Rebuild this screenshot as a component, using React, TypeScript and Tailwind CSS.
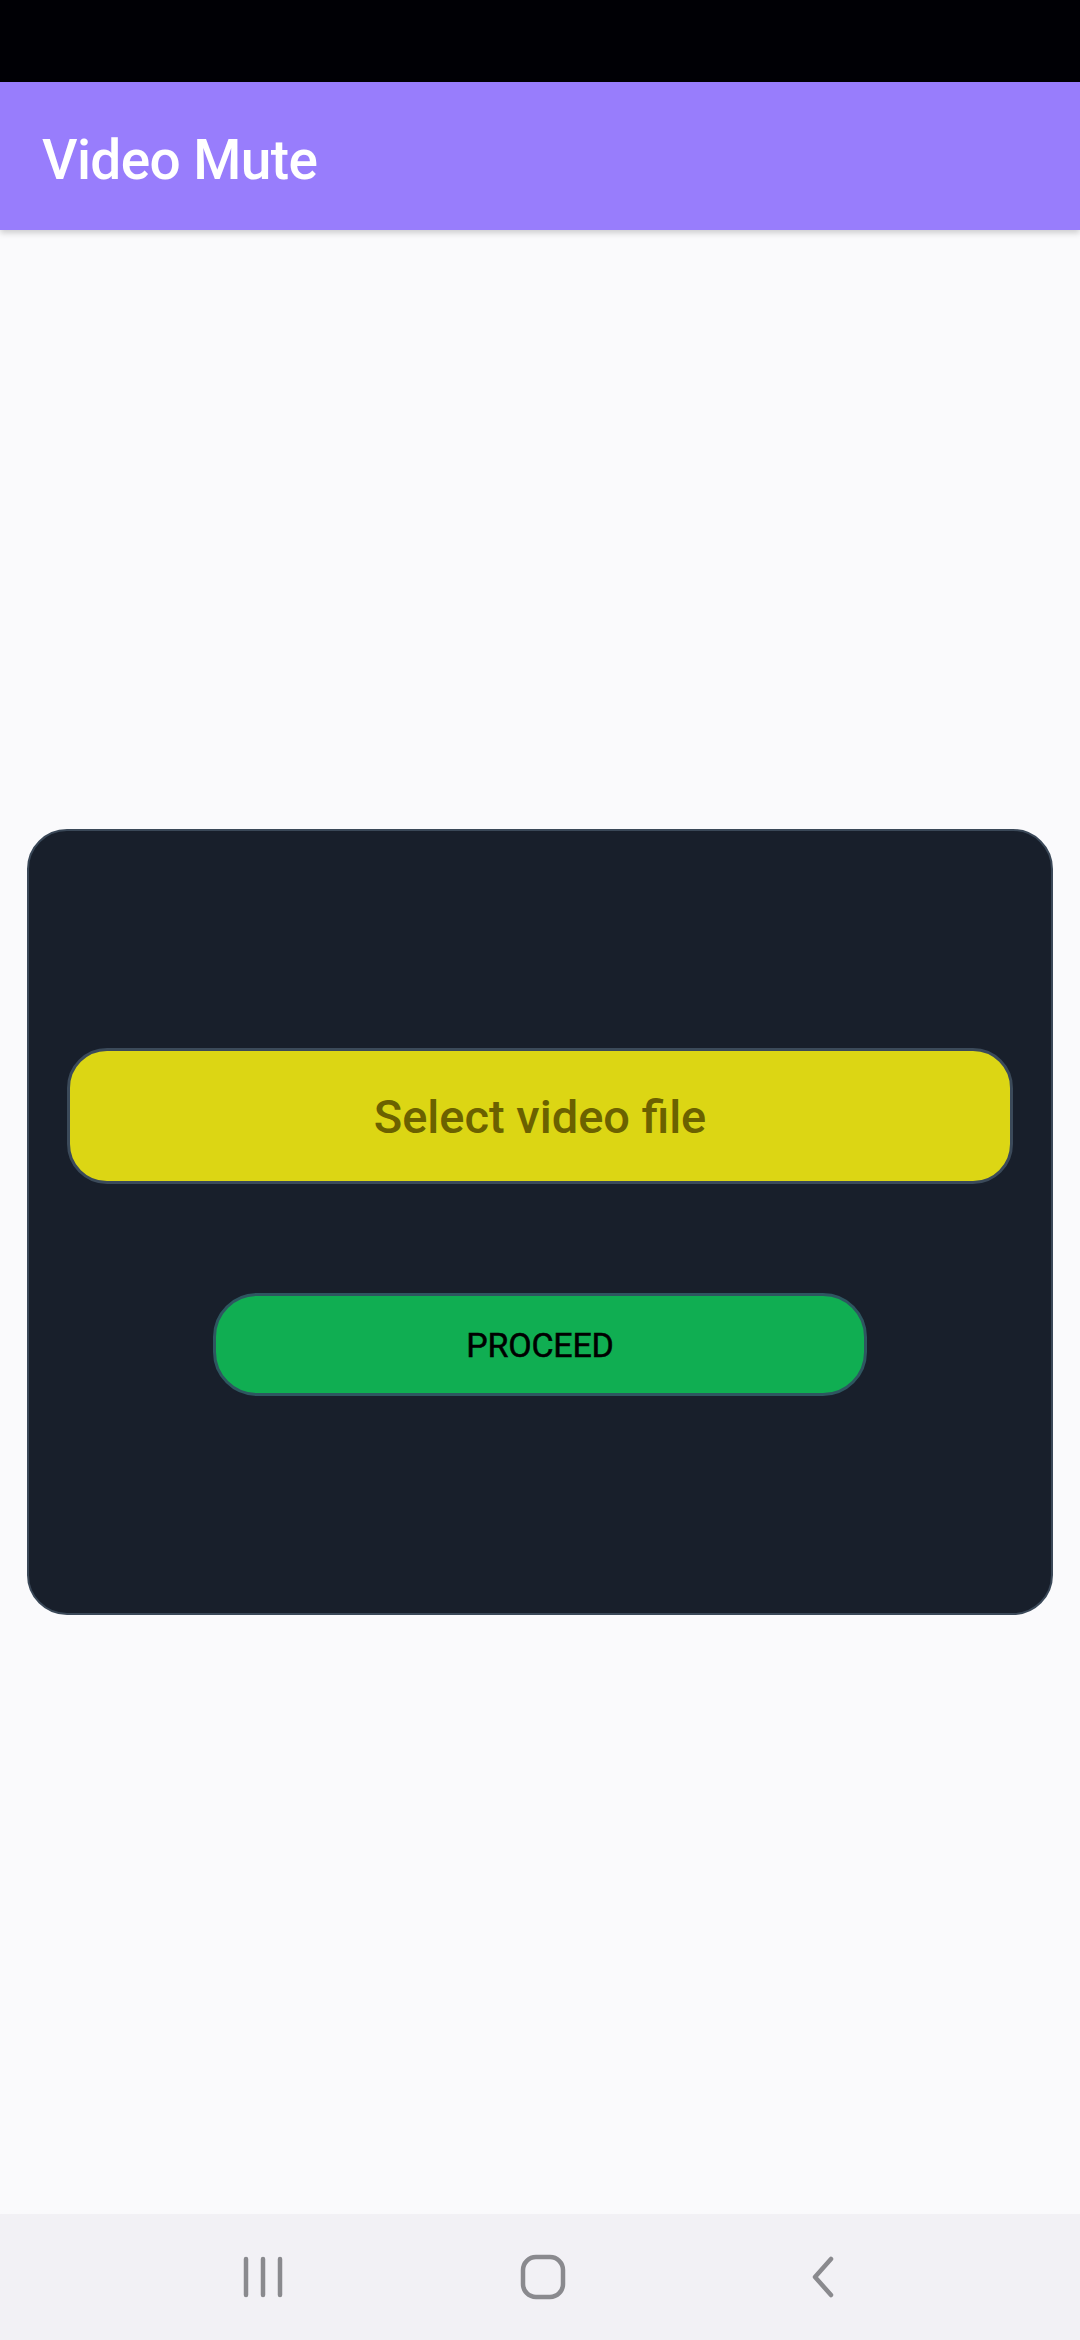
import React from "react";

export default function App() {
  return (
    <div className="w-[1080px] h-[2340px] flex flex-col bg-[#fafafc] overflow-hidden font-['Roboto','Noto_Sans',sans-serif]">
      <div className="h-[82px] bg-[#000005] shrink-0" />
      <div className="h-[148px] shrink-0 bg-[#987dfc] flex items-center px-[42px] shadow-[0_3px_6px_rgba(0,0,0,0.18)] relative z-10">
        <span className="text-white text-[55px] font-medium tracking-[-0.6px] leading-none pt-[8px]">Video Mute</span>
      </div>
      <div className="flex-1 flex items-center justify-center">
        <div className="w-[1026px] h-[786px] rounded-[40px] bg-[#181f2b] border-2 border-[#3a4858] flex flex-col items-center justify-center px-[38px]">
          <div className="w-full h-[136px] rounded-[40px] bg-[#dcd614] border-[3px] border-[#3b4a5a] flex items-center justify-center">
            <span className="text-[#6b6100] text-[47px] font-medium leading-none">Select video file</span>
          </div>
          <div className="mt-[109px] w-[654px] h-[103px] rounded-[44px] bg-[#10ae52] border-[3px] border-[#2e5660] flex items-center justify-center">
            <span className="text-black text-[34px] tracking-[-0.2px] leading-none [-webkit-text-stroke:0.5px_black]">PROCEED</span>
          </div>
        </div>
      </div>
      <div className="h-[126px] shrink-0 bg-[#f2f1f5] flex items-center pl-[233px]">
        <div className="w-[60px] flex justify-center">
          <svg width="42" height="42" viewBox="0 0 42 42">
            <g stroke="#8a8a8e" strokeWidth="4.5" strokeLinecap="round">
              <line x1="4" y1="3" x2="4" y2="39" />
              <line x1="21" y1="3" x2="21" y2="39" />
              <line x1="38" y1="3" x2="38" y2="39" />
            </g>
          </svg>
        </div>
        <div className="w-[60px] ml-[220px] flex justify-center">
          <svg width="46" height="46" viewBox="0 0 46 46">
            <rect x="3" y="3" width="40" height="40" rx="13" fill="none" stroke="#8a8a8e" strokeWidth="4.5" />
          </svg>
        </div>
        <div className="w-[60px] ml-[220px] flex justify-center">
          <svg width="28" height="42" viewBox="0 0 28 42">
            <polyline points="22,3 6,21 22,39" fill="none" stroke="#8a8a8e" strokeWidth="4.5" strokeLinecap="round" strokeLinejoin="round" />
          </svg>
        </div>
      </div>
    </div>
  );
}
